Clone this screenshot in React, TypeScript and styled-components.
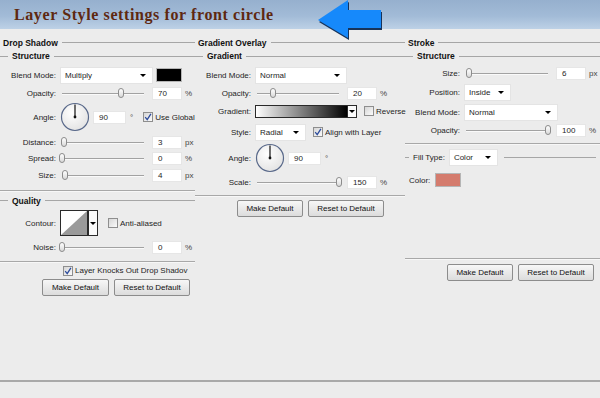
import React from "react";
import styled, { createGlobalStyle } from "styled-components";

const GlobalStyle = createGlobalStyle`
  html, body {
    margin: 0;
    padding: 0;
    background: #ececec;
  }
  body {
    font-family: "Liberation Sans", Arial, sans-serif;
  }
`;

const Page = styled.div`
  position: relative;
  width: 600px;
  height: 398px;
  overflow: hidden;
  background: #ececec;
  color: #1e1e1e;
  font-size: 8px;
`;

const Header = styled.div`
  height: 29px;
  display: flex;
  align-items: center;
  padding-left: 14px;
  background: linear-gradient(to bottom, #96b0ce 0%, #a2bbd7 55%, #bdd1e6 100%);
`;

const Title = styled.h1`
  margin: 0;
  padding-top: 1px;
  font-family: "Liberation Serif", "DejaVu Serif", serif;
  font-weight: bold;
  font-size: 16px;
  letter-spacing: 0.6px;
  color: #5e2810;
`;

const ArrowMark = styled.svg`
  position: absolute;
  left: 316px;
  top: 0;
`;

const Columns = styled.div`
  display: grid;
  grid-template-columns: 195px 210px 195px;
  height: 351px;
  border-bottom: 2px solid #a9a9a9;
`;

const Column = styled.div`
  display: flex;
  flex-direction: column;
  padding-top: 8px;
  min-width: 0;
`;

const Heading = styled.div<{ $sub?: boolean; $h: number }>`
  display: flex;
  align-items: center;
  height: ${(p) => p.$h}px;
  padding-left: ${(p) => (p.$sub ? 0 : 3)}px;
  font-weight: bold;
  font-size: 8.5px;
  color: #111;
  white-space: nowrap;
  &::before {
    content: "";
    display: ${(p) => (p.$sub ? "block" : "none")};
    width: 8px;
    border-top: 1px solid #a6a6a6;
    margin-right: 4px;
  }
  &::after {
    content: "";
    flex: 1;
    border-top: 1px solid #a6a6a6;
    margin-left: 4px;
  }
`;

const Row = styled.div<{ $h: number; $pad?: number; $mt?: number }>`
  display: flex;
  align-items: center;
  height: ${(p) => p.$h}px;
  margin-top: ${(p) => p.$mt ?? 0}px;
  padding-left: ${(p) => p.$pad ?? 0}px;
  white-space: nowrap;
`;

const Label = styled.span<{ $w: number }>`
  flex-shrink: 0;
  width: ${(p) => p.$w}px;
  margin-right: 4px;
  text-align: right;
`;

const SelectBox = styled.div<{ $w: number }>`
  display: flex;
  align-items: center;
  justify-content: space-between;
  flex-shrink: 0;
  width: ${(p) => p.$w}px;
  height: 17px;
  box-sizing: border-box;
  padding: 0 6px 0 4px;
  background: #fff;
  border: 1px solid #e4e4e4;
`;

const Caret = styled.span`
  width: 0;
  height: 0;
  border-left: 3px solid transparent;
  border-right: 3px solid transparent;
  border-top: 3px solid #000;
`;

const Swatch = styled.div<{ $color: string; $ml: number }>`
  width: 26px;
  height: 14px;
  margin-left: ${(p) => p.$ml}px;
  box-sizing: border-box;
  background: ${(p) => p.$color};
  border: 1px solid #b5b5b5;
`;

const Track = styled.div`
  position: relative;
  flex-shrink: 0;
  width: 82px;
  height: 1px;
  margin: 0 8px 0 2px;
  background: #a2a2a2;
  box-shadow: 0 1px 0 #fafafa;
`;

const Thumb = styled.div`
  position: absolute;
  top: -5px;
  width: 6px;
  height: 10px;
  margin-left: -3px;
  box-sizing: border-box;
  border: 1px solid #8c8c8c;
  border-radius: 3px;
  background: linear-gradient(#ffffff, #d9d9d9);
`;

const NumberBox = styled.div<{ $w?: number; $ml?: number }>`
  flex-shrink: 0;
  width: ${(p) => p.$w ?? 30}px;
  height: 13px;
  margin-left: ${(p) => p.$ml ?? 0}px;
  box-sizing: border-box;
  padding-left: 5px;
  line-height: 12px;
  background: #fff;
  border: 1px solid #e6e6e6;
`;

const Unit = styled.span<{ $ml?: number }>`
  margin-left: ${(p) => p.$ml ?? 3}px;
  color: #444;
`;

const Box = styled.span<{ $ml: number }>`
  display: inline-flex;
  align-items: center;
  justify-content: center;
  flex-shrink: 0;
  width: 10px;
  height: 10px;
  margin-left: ${(p) => p.$ml}px;
  margin-right: 2px;
  box-sizing: border-box;
  border: 1px solid #8e8e8e;
  background: linear-gradient(135deg, #d6d6d6, #fbfbfb);
`;

const Picker = styled.div<{ $h: number }>`
  display: flex;
  flex-shrink: 0;
  height: ${(p) => p.$h}px;
  box-sizing: border-box;
  border: 1px solid #2a2a2a;
  background: #fff;
`;

const GradientFill = styled.div`
  width: 91px;
  background: linear-gradient(to right, #ffffff, #000000);
`;

const ContourFill = styled.svg`
  display: block;
  border-right: 1px solid #2a2a2a;
`;

const PickerDrop = styled.div`
  display: flex;
  align-items: center;
  justify-content: center;
  width: 8px;
  border-left: 1px solid #2a2a2a;
  background: #fafafa;
`;

const Rule = styled.div<{ $mt: number; $mb?: number }>`
  margin-top: ${(p) => p.$mt}px;
  margin-bottom: ${(p) => p.$mb ?? 0}px;
  border-top: 1px solid #a8a8a8;
  border-bottom: 1px solid #f7f7f7;
`;

const Dash = styled.span<{ $w: number; $ml?: number }>`
  flex: ${(p) => (p.$w ? "none" : "1")};
  width: ${(p) => p.$w}px;
  margin-left: ${(p) => p.$ml ?? 0}px;
  margin-right: 4px;
  border-top: 1px solid #a6a6a6;
`;

const ButtonRow = styled.div<{ $pt: number }>`
  display: flex;
  gap: 5px;
  padding: ${(p) => p.$pt}px 0 0 42px;
`;

const Button = styled.button<{ $w: number }>`
  width: ${(p) => p.$w}px;
  height: 17px;
  padding: 0;
  font-family: "Liberation Sans", Arial, sans-serif;
  font-size: 8px;
  color: #111;
  border: 1px solid #8c8c8c;
  border-radius: 2px;
  background: linear-gradient(#f7f7f7, #dcdcdc);
`;

const Slider = ({ value }: { value: number }) => (
  <Track>
    <Thumb style={{ left: `${value}%` }} />
  </Track>
);

const Check = ({ checked, ml }: { checked?: boolean; ml: number }) => (
  <Box $ml={ml}>
    {checked && (
      <svg width="8" height="8" viewBox="0 0 8 8">
        <path d="M1.2 4.2 L3.2 6.6 L6.9 0.8" fill="none" stroke="#2d4c9c" strokeWidth="1.3" />
      </svg>
    )}
  </Box>
);

const Dial = () => (
  <svg width="30" height="30" viewBox="0 0 30 30" style={{ flexShrink: 0 }}>
    <defs>
      <radialGradient id="dialFill" cx="40%" cy="35%" r="70%">
        <stop offset="0" stopColor="#ffffff" />
        <stop offset="1" stopColor="#e2e2e2" />
      </radialGradient>
    </defs>
    <circle cx="15" cy="15" r="13.5" fill="url(#dialFill)" stroke="#59698a" strokeWidth="1.2" />
    <line x1="15" y1="15" x2="15" y2="2.5" stroke="#111" strokeWidth="1.2" />
    <circle cx="15" cy="15" r="1.4" fill="#111" />
  </svg>
);

const Select = ({ w, children }: { w: number; children: React.ReactNode }) => (
  <SelectBox $w={w}>
    <span>{children}</span>
    <Caret />
  </SelectBox>
);

const App = () => {
  return (
    <Page>
      <GlobalStyle />
      <Header>
        <Title>Layer Style settings for front circle</Title>
      </Header>
      <ArrowMark width="70" height="41" viewBox="0 0 70 41">
        <polygon points="3,22 33,2 33,12 66,12 66,30 33,30 33,40" fill="#17335a" />
        <polygon points="2,20 32,0 32,10 65,10 65,28 32,28 32,38" fill="#1689fb" />
      </ArrowMark>

      <Columns>
        <Column>
          <Heading $h={11}>Drop Shadow</Heading>
          <Heading $h={16} $sub>Structure</Heading>
          <Row $h={22}>
            <Label $w={56}>Blend Mode:</Label>
            <Select w={93}>Multiply</Select>
            <Swatch $color="#000" $ml={3} />
          </Row>
          <Row $h={14}>
            <Label $w={56}>Opacity:</Label>
            <Slider value={72} />
            <NumberBox>70</NumberBox>
            <Unit>%</Unit>
          </Row>
          <Row $h={34}>
            <Label $w={56}>Angle:</Label>
            <Dial />
            <NumberBox $w={33} $ml={3}>90</NumberBox>
            <Unit $ml={4}>°</Unit>
            <Check checked ml={10} />
            <span>Use Global</span>
          </Row>
          <Row $h={16}>
            <Label $w={56}>Distance:</Label>
            <Slider value={3} />
            <NumberBox>3</NumberBox>
            <Unit>px</Unit>
          </Row>
          <Row $h={16}>
            <Label $w={56}>Spread:</Label>
            <Slider value={0} />
            <NumberBox>0</NumberBox>
            <Unit>%</Unit>
          </Row>
          <Row $h={18}>
            <Label $w={56}>Size:</Label>
            <Slider value={4} />
            <NumberBox>4</NumberBox>
            <Unit>px</Unit>
          </Row>
          <Rule $mt={6} $mb={3} />
          <Heading $h={11} $sub>Quality</Heading>
          <Row $h={34}>
            <Label $w={56}>Contour:</Label>
            <Picker $h={26}>
              <ContourFill width="26" height="24" viewBox="0 0 26 24">
                <polygon points="0,24 26,0 26,24" fill="#9a9a9a" />
              </ContourFill>
              <PickerDrop>
                <Caret />
              </PickerDrop>
            </Picker>
            <Check ml={10} />
            <span>Anti-aliased</span>
          </Row>
          <Row $h={14}>
            <Label $w={56}>Noise:</Label>
            <Slider value={0} />
            <NumberBox>0</NumberBox>
            <Unit>%</Unit>
          </Row>
          <Rule $mt={7} />
          <Row $h={15} $pad={63}>
            <Check checked ml={0} />
            <span>Layer Knocks Out Drop Shadov</span>
          </Row>
          <ButtonRow $pt={1}>
            <Button $w={67}>Make Default</Button>
            <Button $w={76}>Reset to Default</Button>
          </ButtonRow>
        </Column>

        <Column>
          <Heading $h={11}>Gradient Overlay</Heading>
          <Heading $h={16} $sub>Gradient</Heading>
          <Row $h={22}>
            <Label $w={56}>Blend Mode:</Label>
            <Select w={92}>Normal</Select>
          </Row>
          <Row $h={14}>
            <Label $w={56}>Opacity:</Label>
            <Slider value={20} />
            <NumberBox>20</NumberBox>
            <Unit>%</Unit>
          </Row>
          <Row $h={22}>
            <Label $w={56}>Gradient:</Label>
            <Picker $h={13}>
              <GradientFill />
              <PickerDrop>
                <Caret />
              </PickerDrop>
            </Picker>
            <Check ml={7} />
            <span>Reverse</span>
          </Row>
          <Row $h={20}>
            <Label $w={56}>Style:</Label>
            <Select w={51}>Radial</Select>
            <Check checked ml={7} />
            <span>Align with Layer</span>
          </Row>
          <Row $h={32}>
            <Label $w={56}>Angle:</Label>
            <Dial />
            <NumberBox $w={33} $ml={3}>90</NumberBox>
            <Unit $ml={4}>°</Unit>
          </Row>
          <Row $h={16}>
            <Label $w={56}>Scale:</Label>
            <Slider value={100} />
            <NumberBox>150</NumberBox>
            <Unit>%</Unit>
          </Row>
          <Rule $mt={5} />
          <ButtonRow $pt={3}>
            <Button $w={66}>Make Default</Button>
            <Button $w={76}>Reset to Default</Button>
          </ButtonRow>
        </Column>

        <Column>
          <Heading $h={11}>Stroke</Heading>
          <Heading $h={16} $sub>Structure</Heading>
          <Row $h={18}>
            <Label $w={55}>Size:</Label>
            <Slider value={4} />
            <NumberBox>6</NumberBox>
            <Unit>px</Unit>
          </Row>
          <Row $h={21}>
            <Label $w={55}>Position:</Label>
            <Select w={47}>Inside</Select>
          </Row>
          <Row $h={19}>
            <Label $w={55}>Blend Mode:</Label>
            <Select w={94}>Normal</Select>
          </Row>
          <Row $h={16}>
            <Label $w={55}>Opacity:</Label>
            <Slider value={100} />
            <NumberBox>100</NumberBox>
            <Unit>%</Unit>
          </Row>
          <Rule $mt={5} />
          <Row $h={20} $mt={2}>
            <Dash $w={4} />
            <span>Fill Type:</span>
            <Label $w={0} />
            <Select w={49}>Color</Select>
            <Dash $w={0} $ml={6} />
          </Row>
          <Row $h={26} $pad={4}>
            <span>Color:</span>
            <Swatch $color="#d47b6d" $ml={5} />
          </Row>
          <Rule $mt={65} />
          <ButtonRow $pt={4}>
            <Button $w={66}>Make Default</Button>
            <Button $w={76}>Reset to Default</Button>
          </ButtonRow>
        </Column>
      </Columns>
    </Page>
  );
};

export default App;
